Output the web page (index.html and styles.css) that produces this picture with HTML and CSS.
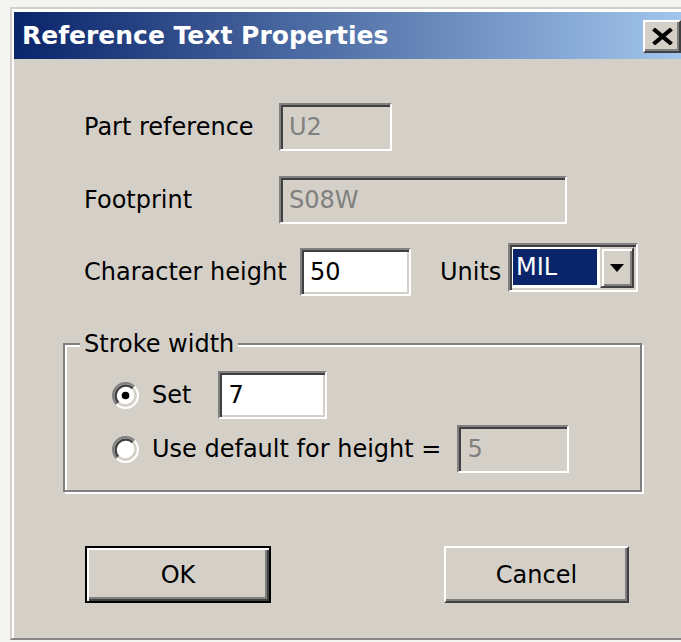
FILE: index.html
```html
<!DOCTYPE html>
<html>
<head>
<meta charset="utf-8">
<title>Reference Text Properties</title>
<link rel="stylesheet" href="styles.css">
</head>
<body>
<div class="window">
  <div class="frame">
    <div class="titlebar">
      <span class="title">Reference Text Properties</span>
      <div class="close-btn">
        <svg width="21" height="17" viewBox="0 0 21 17"><path d="M1.5 1 L19.5 16 M19.5 1 L1.5 16" stroke="#000" stroke-width="4.2" fill="none"/></svg>
      </div>
    </div>
    <div class="content">
      <div class="row">
        <span class="label label-wide">Part reference</span>
        <div class="field disabled w-ref">U2</div>
      </div>
      <div class="row row-fp">
        <span class="label label-wide">Footprint</span>
        <div class="field disabled w-fp">S08W</div>
      </div>
      <div class="row row-height">
        <span class="label label-height">Character height</span>
        <div class="field w-height">50</div>
        <span class="label label-units">Units</span>
        <div class="combo">
          <div class="combo-value">MIL</div>
          <div class="combo-btn"><span class="arrow"></span></div>
        </div>
      </div>
      <div class="group">
        <span class="group-title">Stroke width</span>
        <div class="option option-set">
          <svg class="radio" width="27" height="27" viewBox="0 0 12 12">
            <circle cx="6" cy="6" r="4.2" fill="#fff"/>
            <path d="M2.11 9.89 A5.5 5.5 0 0 1 9.89 2.11" fill="none" stroke="#808080"/>
            <path d="M9.89 2.11 A5.5 5.5 0 0 1 2.11 9.89" fill="none" stroke="#fff"/>
            <path d="M2.82 9.18 A4.5 4.5 0 0 1 9.18 2.82" fill="none" stroke="#404040"/>
            <path d="M9.18 2.82 A4.5 4.5 0 0 1 2.82 9.18" fill="none" stroke="#d4d0c8"/>
            <circle cx="6" cy="6" r="1.7" fill="#000"/>
          </svg>
          <span class="label">Set</span>
          <div class="field w-set">7</div>
        </div>
        <div class="option option-default">
          <svg class="radio" width="27" height="27" viewBox="0 0 12 12">
            <circle cx="6" cy="6" r="4.2" fill="#fff"/>
            <path d="M2.11 9.89 A5.5 5.5 0 0 1 9.89 2.11" fill="none" stroke="#808080"/>
            <path d="M9.89 2.11 A5.5 5.5 0 0 1 2.11 9.89" fill="none" stroke="#fff"/>
            <path d="M2.82 9.18 A4.5 4.5 0 0 1 9.18 2.82" fill="none" stroke="#404040"/>
            <path d="M9.18 2.82 A4.5 4.5 0 0 1 2.82 9.18" fill="none" stroke="#d4d0c8"/>
          </svg>
          <span class="label">Use default for height =</span>
          <div class="field disabled w-default">5</div>
        </div>
      </div>
      <div class="buttons">
        <div class="btn btn-default">OK</div>
        <div class="btn btn-cancel">Cancel</div>
      </div>
    </div>
  </div>
</div>
</body>
</html>
```

FILE: styles.css
```css
* {
  box-sizing: border-box;
}

html,
body {
  margin: 0;
  height: 100%;
  overflow: hidden;
}

body {
  background: #f4f4f2;
  font-family: "DejaVu Sans", "Noto Sans", sans-serif;
  font-size: 24px;
  color: #000;
}

/* Window frame */
.window {
  margin: 7px 0 0 10px;
  width: 690px;
  height: 633px;
  border-top: 2px solid #d4d0c8;
  border-left: 2px solid #d4d0c8;
  border-bottom: 2px solid #868686;
  background: #d4d0c8;
}

.frame {
  height: 100%;
  border-top: 3px solid #fff;
  border-left: 2px solid #fff;
}

/* Caption bar */
.titlebar {
  height: 47px;
  display: flex;
  align-items: center;
  justify-content: space-between;
  padding: 0 19px 0 8px;
  background: linear-gradient(to right, #0a246a, #a6caf0);
}

.title {
  color: #fff;
  font-weight: bold;
  font-size: 25px;
}

.close-btn {
  width: 38px;
  height: 33px;
  margin-top: 2px;
  background: #d4d0c8;
  border: 2px solid;
  border-color: #fff #404040 #404040 #fff;
  box-shadow: inset -2px -2px 0 #808080;
  display: flex;
  align-items: center;
  justify-content: center;
}

.close-btn svg {
  display: block;
}

/* Dialog body */
.content {
  padding: 44px 0 0 49px;
}

.row {
  display: flex;
  align-items: center;
  padding-left: 21px;
}

.row-fp {
  margin-top: 25px;
}

.row-height {
  margin-top: 19px;
}

.label {
  white-space: nowrap;
}

.label-wide {
  width: 195px;
}

.label-height {
  width: 216px;
}

.label-units {
  margin-left: 29px;
  width: 68px;
}

/* Sunken edit boxes */
.field {
  height: 48px;
  display: flex;
  align-items: center;
  padding-left: 8px;
  background: #fff;
  border: 2px solid;
  border-color: #808080 #fff #fff #808080;
  box-shadow: inset 2px 2px 0 #404040, inset -2px -2px 0 #d4d0c8;
  white-space: nowrap;
}

.field.disabled {
  background: #d4d0c8;
  color: #808080;
}

.w-ref {
  width: 113px;
}

.w-fp {
  width: 288px;
}

.w-height {
  width: 111px;
}

.w-set {
  width: 109px;
  margin-left: 27px;
}

.w-default {
  width: 112px;
  margin-left: 16px;
}

/* Units drop-down */
.combo {
  width: 130px;
  height: 49px;
  margin-bottom: 9px;
  display: flex;
  padding: 2px;
  background: #fff;
  border: 2px solid;
  border-color: #808080 #fff #fff #808080;
  box-shadow: inset 2px 2px 0 #404040, inset -2px -2px 0 #d4d0c8;
}

.combo-value {
  flex: 1;
  margin: 2px 3px 3px 1px;
  padding-left: 3px;
  background: #0a246a;
  color: #fff;
  display: flex;
  align-items: center;
}

.combo-btn {
  width: 34px;
  background: #d4d0c8;
  border: 2px solid;
  border-color: #d4d0c8 #404040 #404040 #d4d0c8;
  box-shadow: inset 2px 2px 0 #fff, inset -2px -2px 0 #808080;
  display: flex;
  align-items: center;
  justify-content: center;
}

.arrow {
  width: 0;
  height: 0;
  border-left: 7px solid transparent;
  border-right: 7px solid transparent;
  border-top: 8px solid #000;
}

/* Etched group box */
.group {
  margin-top: 42px;
  width: 579px;
  height: 149px;
  border: 2px solid #808080;
  box-shadow: 2px 2px 0 #fff, inset 2px 2px 0 #fff;
  display: flex;
  flex-direction: column;
  align-items: flex-start;
  padding-left: 47px;
}

.group-title {
  margin: -15px 0 0 -32px;
  padding: 0 4px;
  line-height: 28px;
  background: #d4d0c8;
}

.option {
  display: flex;
  align-items: center;
}

.option-set {
  margin-top: 13px;
}

.option-default {
  margin-top: 6px;
}

.radio {
  flex: none;
  display: block;
  margin-right: 13px;
}

/* Push buttons */
.buttons {
  display: flex;
  margin-top: 54px;
  padding-left: 22px;
}

.btn {
  width: 186px;
  height: 57px;
  display: flex;
  align-items: center;
  justify-content: center;
  background: #d4d0c8;
  border: 2px solid;
  border-color: #fff #404040 #404040 #fff;
  box-shadow: inset -2px -2px 0 #808080;
}

.btn-default {
  border: 2px solid #000;
  box-shadow: inset 2px 2px 0 #fff, inset -2px -2px 0 #404040, inset -4px -4px 0 #808080;
}

.btn-cancel {
  width: 185px;
  margin-left: 173px;
}
```
